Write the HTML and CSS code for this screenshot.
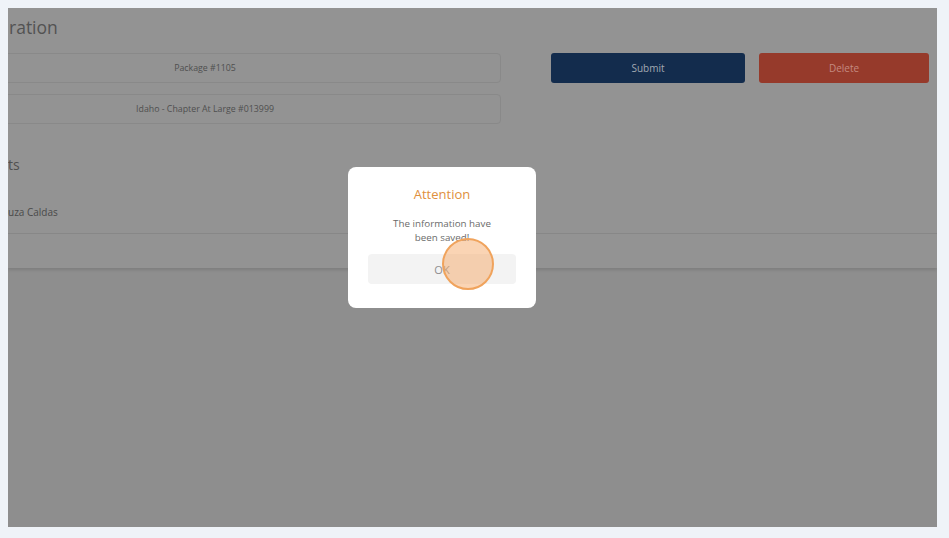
FILE: index.html
```html
<!DOCTYPE html>
<html lang="en">
<head>
    <meta charset="UTF-8">
    <meta name="viewport" content="width=device-width, initial-scale=1.0">
    <title>Registration</title>
    <link rel="stylesheet" href="styles.css">
</head>
<body>
    <div class="shot">
        <div class="page">
            <h1 class="title">ration</h1>

            <div class="form-row">
                <div class="fields">
                    <div class="field">Package #1105</div>
                    <div class="field">Idaho - Chapter At Large #013999</div>
                </div>
                <div class="actions">
                    <button class="btn submit">Submit</button>
                    <button class="btn delete">Delete</button>
                </div>
            </div>

            <h2 class="section">ts</h2>
            <div class="list-row">uza Caldas</div>
        </div>

        <div class="modal">
            <div class="modal-title">Attention</div>
            <p class="modal-text">The information have<br>been saved!</p>
            <button class="modal-ok">OK</button>
            <span class="click-dot"></span>
        </div>
    </div>
</body>
</html>
```

FILE: styles.css
```css
body {
    margin: 0;
    padding: 8px;
    background: #eff3f8;
    font-family: "Open Sans", "Noto Sans", sans-serif;
}

.shot {
    position: relative;
    width: 929px;
    height: 519px;
    overflow: hidden;
    background: #8e8e8e;
}

.page {
    height: 260px;
    background: #939393;
    box-shadow: 0 2px 3px rgba(0, 0, 0, 0.12);
}

.title {
    margin: 0 0 0 1px;
    padding-top: 6px;
    height: 36px;
    font-size: 17.5px;
    font-weight: 400;
    color: #525252;
    line-height: 26px;
}

.form-row {
    display: flex;
    align-items: flex-start;
    margin-top: 3px;
    margin-left: -99px;
}

.fields {
    width: 592px;
    display: flex;
    flex-direction: column;
    gap: 11px;
}

.field {
    height: 28px;
    border: 1px solid #898989;
    border-radius: 4px;
    text-align: center;
    font-size: 8.8px;
    line-height: 28px;
    color: #4f4f4f;
}

.actions {
    display: flex;
    gap: 14px;
    margin-left: 50px;
}

.btn {
    height: 30px;
    border: none;
    border-radius: 3px;
    font-family: inherit;
    font-size: 10px;
    cursor: pointer;
}

.submit {
    width: 194px;
    background: #132c4d;
    color: #a2a8b2;
}

.delete {
    width: 170px;
    background: #963a2b;
    color: #c48a80;
}

.section {
    margin: 31px 0 0 0;
    font-size: 14px;
    font-weight: 400;
    color: #505050;
    line-height: 20px;
}

.list-row {
    margin-top: 29px;
    padding: 0 0 13px 0;
    border-bottom: 1px solid #878787;
    font-size: 10px;
    line-height: 16px;
    color: #4a4a4a;
}

.modal {
    position: absolute;
    left: 340px;
    top: 159px;
    width: 188px;
    height: 141px;
    box-sizing: border-box;
    padding: 18px 20px 0;
    background: #fff;
    border-radius: 8px;
    text-align: center;
}

.modal-title {
    font-size: 13px;
    line-height: 18px;
    color: #e0903d;
}

.modal-text {
    margin: 14px 0 0;
    font-size: 9.8px;
    line-height: 14px;
    color: #6a6a6a;
}

.modal-ok {
    display: block;
    width: 148px;
    height: 30px;
    margin-top: 9px;
    border: none;
    border-radius: 4px;
    background: #f3f3f3;
    font-family: inherit;
    font-size: 11px;
    color: #8f8f8f;
}

.click-dot {
    position: absolute;
    left: 94px;
    top: 71px;
    width: 48px;
    height: 48px;
    border: 2px solid #f0a35c;
    border-radius: 50%;
    background: rgba(245, 170, 105, 0.5);
}
```
